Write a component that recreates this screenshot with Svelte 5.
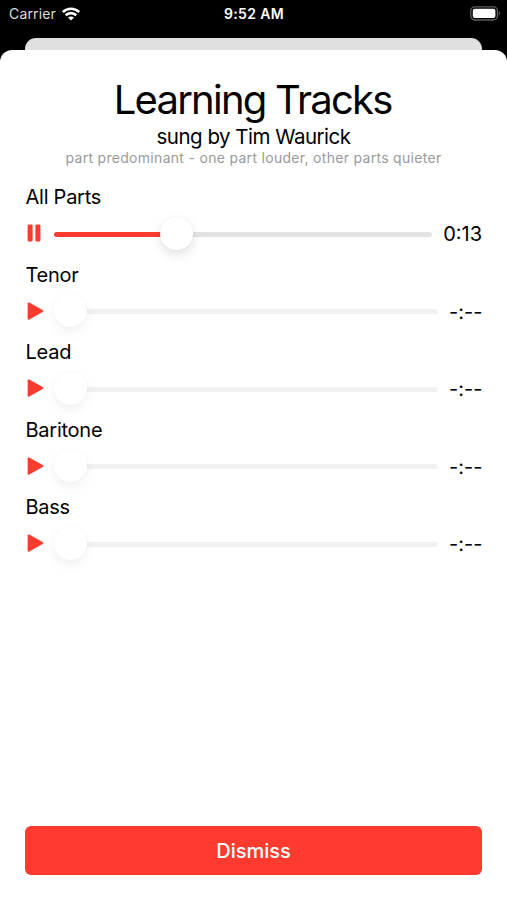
<script lang="ts">
  interface Track {
    name: string;
    playing: boolean;
    progress: number;
    time: string | null;
  }

  let tracks: Track[] = $state([
    { name: 'All Parts', playing: true, progress: 0.309, time: '0:13' },
    { name: 'Tenor', playing: false, progress: 0, time: null },
    { name: 'Lead', playing: false, progress: 0, time: null },
    { name: 'Baritone', playing: false, progress: 0, time: null },
    { name: 'Bass', playing: false, progress: 0, time: null }
  ]);

  function toggle(track: Track) {
    track.playing = !track.playing;
  }
</script>

<div class="screen">
  <div class="status-bar">
    <div class="carrier">
      <span>Carrier</span>
      <svg width="18" height="14" viewBox="0 0 18 14" fill="none" stroke="#fff" stroke-width="2.6">
        <path d="M0.8 5.1C5.4 0.6 12.6 0.6 17.2 5.1" />
        <path d="M3.7 8.3C6.7 5.4 11.3 5.4 14.3 8.3" />
        <path d="M9 13.6L6 10.6C7.8 9 10.2 9 12 10.6Z" fill="#fff" stroke="none" />
      </svg>
    </div>
    <span class="clock">9:52 AM</span>
    <svg class="battery" width="31" height="15" viewBox="0 0 31 15">
      <rect x="0.8" y="0.8" width="26.6" height="13.2" rx="4" fill="none" stroke="#5c5c5c" stroke-width="1.3" />
      <rect x="2.8" y="2.7" width="22.6" height="9.4" rx="2" fill="#fff" />
      <path d="M28.8 5.1C30.5 5.9 30.5 8.9 28.8 9.7Z" fill="#5c5c5c" />
    </svg>
  </div>

  <div class="card-behind"></div>

  <main class="sheet">
    <header>
      <h1>Learning Tracks</h1>
      <p class="singer">sung by Tim Waurick</p>
      <p class="note">part predominant - one part louder, other parts quieter</p>
    </header>

    <div class="tracks">
      {#each tracks as track}
        <section class="track">
          <h2>{track.name}</h2>
          <div class="player">
            <button
              type="button"
              class="toggle"
              aria-label={track.playing ? 'Pause' : 'Play'}
              onclick={() => toggle(track)}
            >
              <svg width="19" height="20" viewBox="0 0 19 20" fill="#ff3b30">
                {#if track.playing}
                  <rect x="2.6" y="1.6" width="5" height="17" rx="1.1" />
                  <rect x="10.4" y="1.6" width="5" height="17" rx="1.1" />
                {:else}
                  <path d="M2.6 2.6C2.6 1.5 3.4 1.1 4.3 1.6L17.6 9C18.6 9.6 18.6 10.5 17.6 11.1L4.3 18.5C3.4 19 2.6 18.6 2.6 17.5Z" />
                {/if}
              </svg>
            </button>
            <div class="slider" class:disabled={track.time === null}>
              <div class="fill" style="width: {track.progress * 100}%"></div>
              <div class="thumb" style="left: calc((100% - 33px) * {track.progress})"></div>
            </div>
            <span class="time" class:empty={track.time === null}>{track.time ?? '-:--'}</span>
          </div>
        </section>
      {/each}
    </div>

    <button type="button" class="dismiss">Dismiss</button>
  </main>
</div>

<style>
  :global(body) {
    background: #000;
  }

  .screen {
    display: flex;
    flex-direction: column;
    height: 900px;
    overflow: hidden;
    background: #000;
    color: #000;
    font-family: Inter, 'Liberation Sans', sans-serif;
  }

  .status-bar {
    display: grid;
    grid-template-columns: 1fr auto 1fr;
    align-items: center;
    flex: none;
    height: 27px;
    margin-bottom: 11px;
    padding: 0 6px 0 9px;
    color: #fff;
    font-size: 14px;
  }

  .carrier {
    display: flex;
    align-items: center;
    gap: 6px;
    color: #ddd;
    letter-spacing: 0.15px;
  }

  .clock {
    margin-left: -2px;
    font-weight: 600;
    letter-spacing: 0.35px;
  }

  .battery {
    justify-self: end;
  }

  .card-behind {
    flex: none;
    height: 12px;
    margin: 0 25px;
    border-radius: 11px 11px 0 0;
    background: #e0e0e0;
  }

  .sheet {
    display: flex;
    flex: 1;
    flex-direction: column;
    box-sizing: border-box;
    padding: 25px 25px 24.6px;
    border-radius: 12px 12px 0 0;
    background: #fff;
  }

  header {
    text-align: center;
  }

  h1,
  h2,
  p {
    margin: 0;
    font-weight: 400;
  }

  h1 {
    font-size: 40px;
    line-height: 49px;
    letter-spacing: -1.75px;
    text-indent: -1.75px;
  }

  .singer {
    font-size: 20.5px;
    line-height: 25px;
    letter-spacing: -0.5px;
  }

  .note {
    color: #9a9a9a;
    font-size: 14px;
    line-height: 17px;
    letter-spacing: 0.3px;
  }

  .tracks {
    display: flex;
    flex-direction: column;
    gap: 12.5px;
    margin-top: 19px;
  }

  h2 {
    padding-left: 0.5px;
    font-size: 20px;
    line-height: 25px;
    letter-spacing: -0.25px;
  }

  .player {
    display: flex;
    align-items: center;
    height: 34px;
    margin-top: 6px;
  }

  .toggle {
    display: flex;
    margin: 0 9.5px 0 0;
    padding: 0;
    border: none;
    background: none;
    cursor: pointer;
  }

  .slider {
    position: relative;
    flex: 1;
    height: 5px;
    margin-top: 2px;
    border-radius: 3px;
    background: #e3e3e4;
  }

  .slider.disabled {
    background: #f1f1f1;
  }

  .fill {
    height: 100%;
    border-radius: 3px;
    background: #ff3b30;
  }

  .thumb {
    position: absolute;
    top: -15px;
    width: 33px;
    height: 33px;
    border-radius: 50%;
    background: #fff;
    box-shadow: 0 5px 12px rgba(0, 0, 0, 0.11), 0 0 3px rgba(0, 0, 0, 0.06);
  }

  .disabled .thumb {
    box-shadow: 0 5px 12px rgba(0, 0, 0, 0.06), 0 0 2px rgba(0, 0, 0, 0.03);
  }

  .time {
    width: 39px;
    margin: 2px 0 0 11px;
    font-size: 20px;
    line-height: 25px;
    letter-spacing: 0;
    text-align: right;
    white-space: nowrap;
  }

  .time.empty {
    width: 33px;
    margin-top: 3px;
  }

  .dismiss {
    height: 49px;
    margin-top: auto;
    padding: 1px 0 0;
    border: none;
    border-radius: 6px;
    background: #ff3b30;
    color: #fff;
    font-family: inherit;
    font-size: 20px;
    font-weight: 500;
    cursor: pointer;
  }
</style>
